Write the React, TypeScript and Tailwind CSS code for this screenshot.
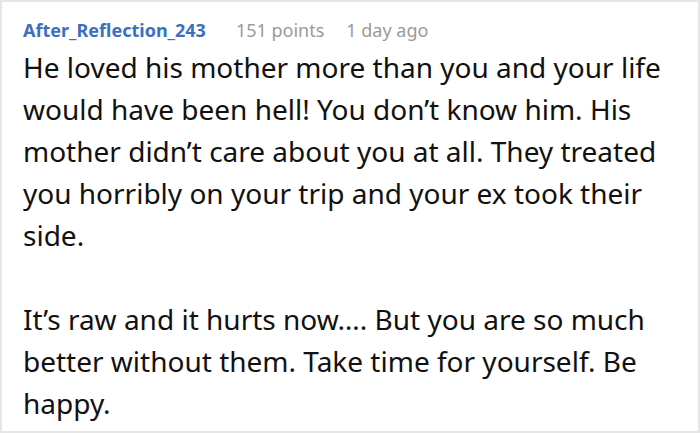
export default function App() {
  return (
    <div className="w-[700px] h-[433px] bg-white border-2 border-[#e6e6e6] overflow-hidden" style={{ fontFamily: '"Noto Sans", "Open Sans", sans-serif' }}>
      <div className="pl-[21px] pr-[24px] pt-[16px]">
        {/* Header */}
        <div className="flex items-baseline text-[18px] leading-[24px]">
          <span className="font-bold text-[#3b6fc0]">After_Reflection_243</span>
          <span className="ml-[30px] text-[#9a9a9a]">151 points</span>
          <span className="ml-[22px] text-[#9a9a9a]">1 day ago</span>
        </div>
        {/* Comment body */}
        <div className="mt-[4px] text-[28px] leading-[42px] text-[#111]">
          <p>
            He loved his mother more than you and your life would have been hell! You don’t know him. His mother didn’t care about you at all. They treated you horribly on your trip and your ex took their side.
          </p>
          <p className="mt-[42px]">
            It’s raw and it hurts now…. But you are so much better without them. Take time for yourself. Be happy.
          </p>
        </div>
      </div>
    </div>
  )
}
